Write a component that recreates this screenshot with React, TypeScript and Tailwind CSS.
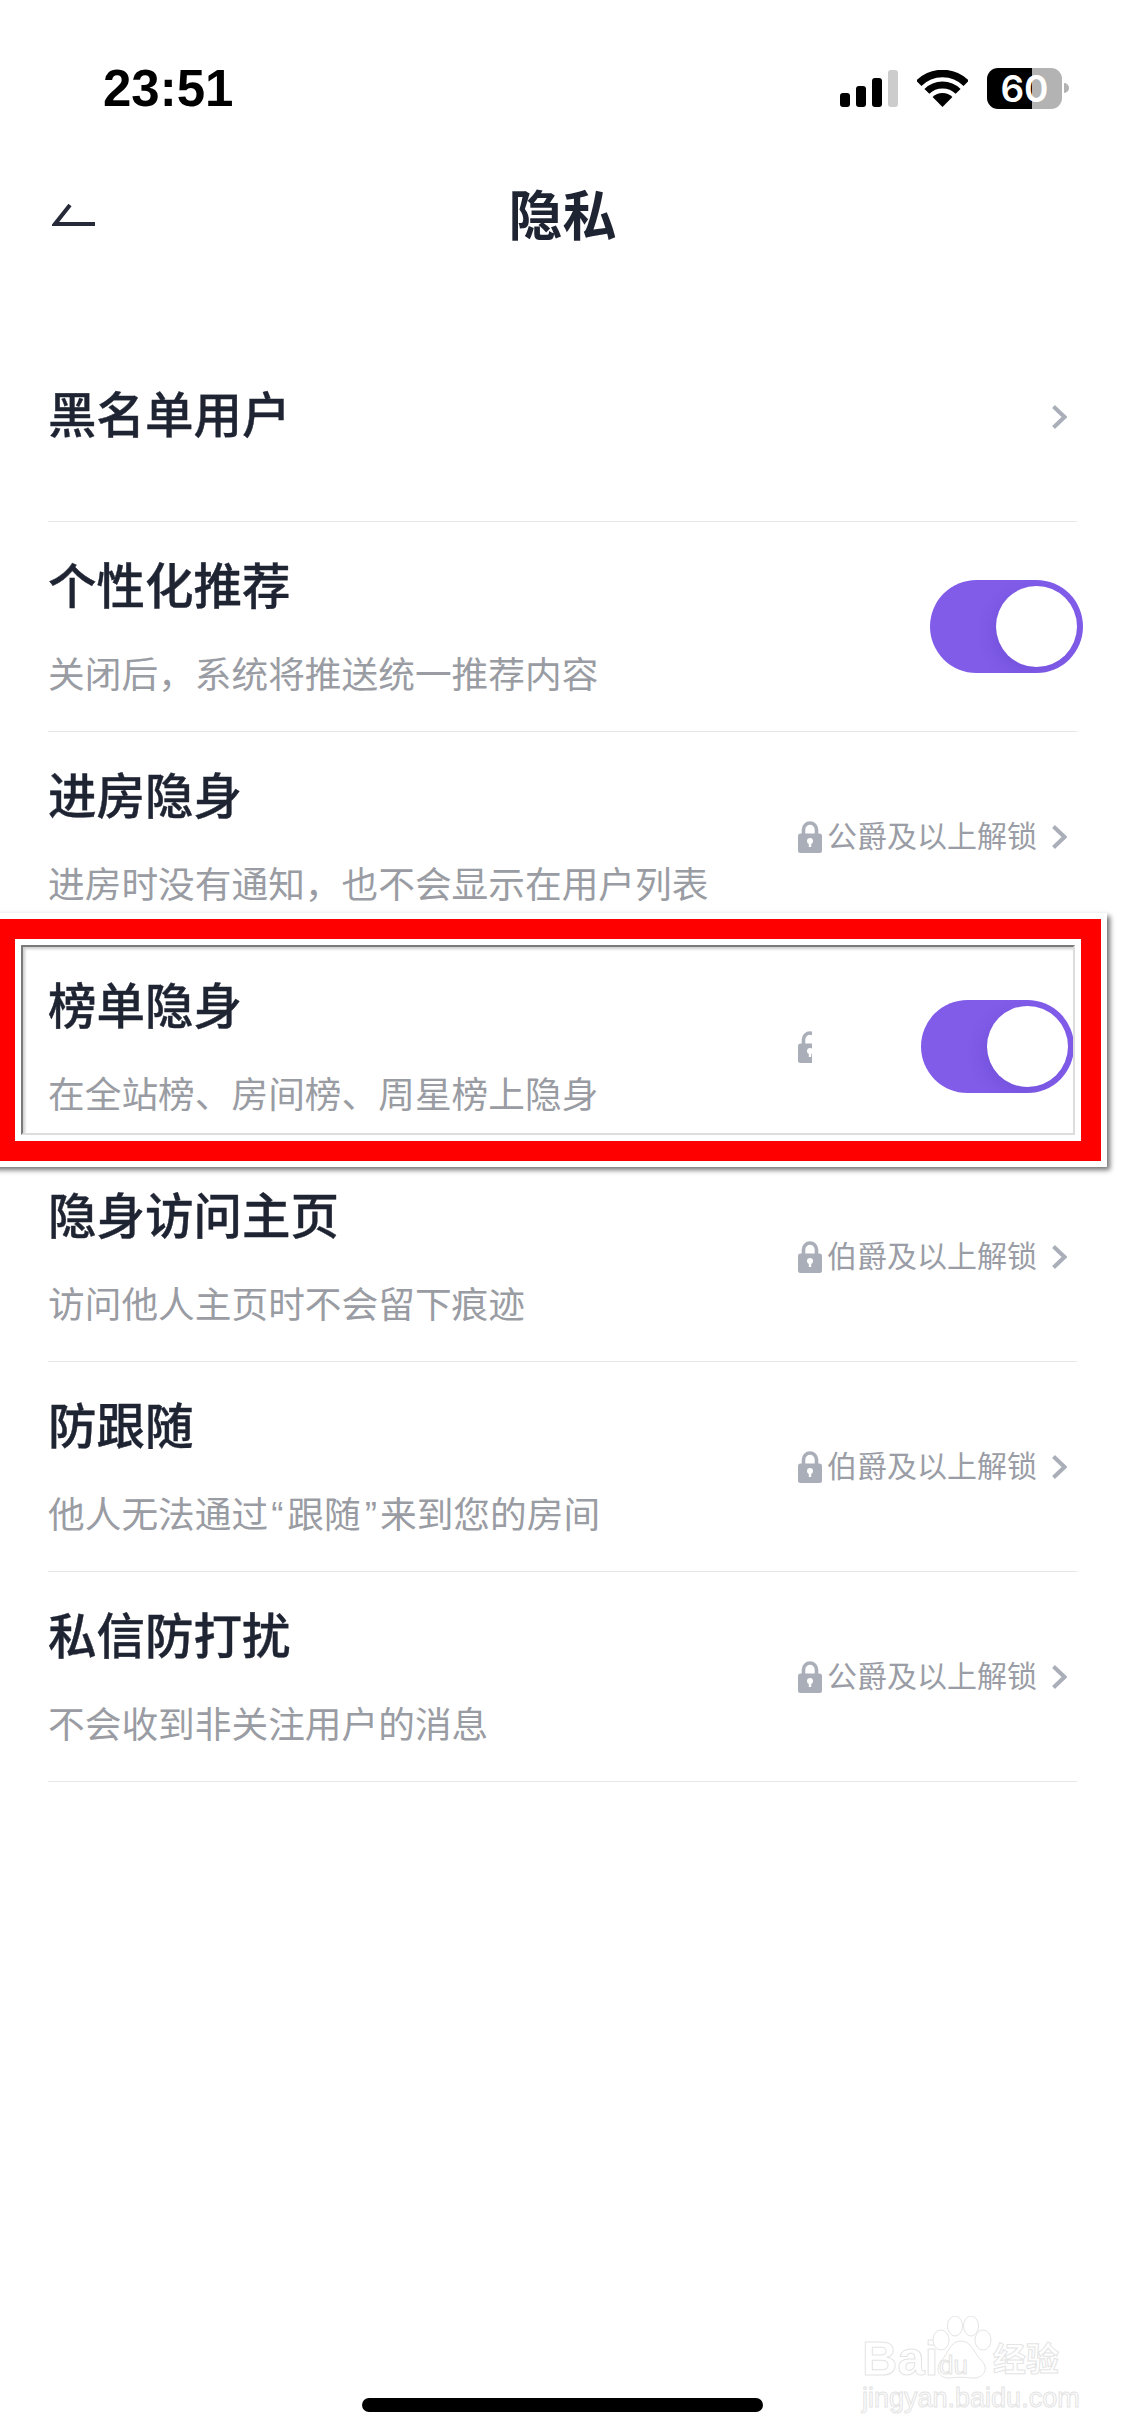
import type { ReactNode } from "react";

const CJK = "font-['Liberation_Sans','Noto_Sans_CJK_SC',sans-serif]";

type Row = {
  title: string;
  sub?: ReactNode;
  unlock?: string;
  on?: boolean;
};

const ROWS: Row[] = [
  { title: "个性化推荐", sub: "关闭后，系统将推送统一推荐内容", on: true },
  { title: "进房隐身", sub: "进房时没有通知，也不会显示在用户列表", unlock: "公爵及以上解锁" },
  { title: "榜单隐身", sub: "在全站榜、房间榜、周星榜上隐身", on: true },
  { title: "隐身访问主页", sub: "访问他人主页时不会留下痕迹", unlock: "伯爵及以上解锁" },
  {
    title: "防跟随",
    sub: (
      <>
        他人无法通过<span className="ml-[3px] mr-[4px]">“</span>跟随<span className="ml-[4px] mr-[3px]">”</span>来到您的房间
      </>
    ),
    unlock: "伯爵及以上解锁",
  },
  { title: "私信防打扰", sub: "不会收到非关注用户的消息", unlock: "公爵及以上解锁" },
];

function Chevron() {
  return (
    <svg width="15" height="24" viewBox="0 0 15 24" fill="none" className="shrink-0">
      <path d="M1.5 1.5 L12.5 12 L1.5 22.5" stroke="#a9aeb8" strokeWidth="4" />
    </svg>
  );
}

function Lock() {
  return (
    <svg width="24" height="32" viewBox="0 0 24 32" className="shrink-0">
      <path d="M5.5 15 V8.5 a6.5 6.5 0 0 1 13 0 V15" fill="none" stroke="#a9aeb8" strokeWidth="3.6" />
      <rect x="0" y="12.5" width="24" height="19.5" rx="2.5" fill="#a9aeb8" />
      <circle cx="12" cy="20" r="3" fill="#fff" />
      <rect x="10.8" y="20" width="2.4" height="6" fill="#fff" />
    </svg>
  );
}

function Toggle({ className }: { className: string }) {
  return (
    <div className={`flex h-[93px] w-[153px] shrink-0 items-center justify-end overflow-hidden rounded-full bg-[#805ce9] pr-[6px] ${className}`}>
      <div className="h-[81px] w-[81px] rounded-full bg-white shadow-[-6px_6px_14px_rgba(80,50,170,0.18)]" />
    </div>
  );
}

function Wifi() {
  return (
    <svg width="51" height="37" viewBox="0 0 51 37" fill="none">
      <path d="M25.5 37 L15.6 27.1 A14 14 0 0 1 35.4 27.1 Z" fill="#000" />
      <path d="M9.9 21.4 A22 22 0 0 1 41.1 21.4" stroke="#000" strokeWidth="7" />
      <path d="M1.8 13.3 A33.5 33.5 0 0 1 49.2 13.3" stroke="#000" strokeWidth="7.5" />
    </svg>
  );
}

function StatusBar() {
  return (
    <div className="flex h-[176px] items-center justify-between pl-[103px] pr-[56px]">
      <span className="font-['Liberation_Sans',sans-serif] text-[51px] font-bold leading-none text-black">23:51</span>
      <div className="flex items-center">
        <div className="flex items-end gap-[6px]">
          <div className="h-[14px] w-[10px] rounded-[3px] bg-black" />
          <div className="h-[21px] w-[10px] rounded-[3px] bg-black" />
          <div className="h-[29px] w-[10px] rounded-[3px] bg-black" />
          <div className="h-[37px] w-[10px] rounded-[3px] bg-[#cccccc]" />
        </div>
        <div className="ml-[19px]">
          <Wifi />
        </div>
        <div className="relative ml-[19px] flex h-[41px] w-[75px]">
          <div className="h-full w-[45px] rounded-l-[11px] bg-black" />
          <div className="h-full w-[30px] rounded-r-[11px] bg-[#b3b3b3]" />
          <span className="absolute inset-0 flex items-center justify-center font-['Inter',sans-serif] text-[37px] font-semibold leading-none text-white">60</span>
        </div>
        <div className="ml-[2px] h-[10px] w-[5px] rounded-r-full bg-[#b3b3b3]" />
      </div>
    </div>
  );
}

function Header() {
  return (
    <div className="relative flex h-[78px] items-center justify-center">
      <svg width="44" height="23" viewBox="0 0 44 23" fill="none" className="absolute left-[52px] top-[28px]">
        <path d="M18 1 L3 20 H43" stroke="#262a38" strokeWidth="4" />
      </svg>
      <span className="pt-[4px] text-[54px] font-bold leading-none text-[#1f2433]">隐私</span>
    </div>
  );
}

const TITLE = "text-[48.5px] font-medium leading-[60px] text-[#1f2433] [-webkit-text-stroke:0.4px_#1f2433]";

function SettingRow({ row, shifted }: { row: Row; shifted: boolean }) {
  return (
    <div className="flex h-[210px] items-center justify-between border-b border-[#e6e7e9]">
      <div className="pt-[5px]">
        <div className={TITLE}>{row.title}</div>
        <div className="mt-[34px] text-[36.7px] leading-[50px] text-[#9a9ca3]">{row.sub}</div>
      </div>
      {row.unlock && (
        <div className="mr-[10px] flex items-center">
          <Lock />
          <span className="ml-[5px] mr-[15px] text-[30px] leading-none text-[#9a9da5]">{row.unlock}</span>
          <Chevron />
        </div>
      )}
      {row.on && !shifted && <Toggle className="mr-[-6px]" />}
      {row.on && shifted && (
        <div className="mr-[3px] flex items-center">
          <div className="mr-[109px] w-[14px] overflow-hidden">
            <Lock />
          </div>
          <Toggle className="" />
        </div>
      )}
    </div>
  );
}

// red annotation drawn on top of the screenshot
function RedFrame() {
  return (
    <div className="pointer-events-none absolute left-[-11px] top-[913px] h-[254px] w-[1118px] border-[6px] border-white shadow-[3px_3px_5px_rgba(0,0,0,0.55)]">
      <div className="h-full w-full border-[20px] border-[#ff0000]">
        <div className="h-full w-full border-[6px] border-white">
          <div className="h-full w-full border-2 border-t-[#7a7a7a] border-l-[#7a7a7a] border-r-[#dddddd] border-b-[#dddddd] shadow-[inset_2px_2px_3px_rgba(0,0,0,0.2)]" />
        </div>
      </div>
    </div>
  );
}

function Watermark() {
  const stroke = "text-white [-webkit-text-stroke:1px_#e4e4e4]";
  return (
    <div className="pointer-events-none absolute left-[860px] top-[2314px] h-[100px] w-[210px]">
      <span className={`absolute left-[2px] top-[20px] font-['Liberation_Sans',sans-serif] text-[49px] font-bold leading-none ${stroke}`}>Bai</span>
      <svg width="62" height="64" viewBox="0 0 62 64" className="absolute left-[70px] top-[2px]" fill="#fff" stroke="#e4e4e4" strokeWidth="1">
        <ellipse cx="11" cy="24" rx="8" ry="10" />
        <ellipse cx="25" cy="10" rx="7.5" ry="10" />
        <ellipse cx="41" cy="10" rx="7.5" ry="10" />
        <ellipse cx="53" cy="24" rx="8" ry="10" />
        <path d="M31 25 C42 25 44 38 52 45 C60 54 52 63 42 62 C34 61 28 61 20 62 C10 63 4 54 11 45 C18 38 20 25 31 25 Z" />
      </svg>
      <span className={`absolute left-[79px] top-[38px] font-['Liberation_Sans',sans-serif] text-[26px] leading-none ${stroke}`}>du</span>
      <span className={`absolute left-[133px] top-[29px] text-[33px] font-bold leading-none ${stroke}`}>经验</span>
      <span className={`absolute left-[2px] top-[71px] font-['Liberation_Sans',sans-serif] text-[27px] leading-none ${stroke}`}>jingyan.baidu.com</span>
    </div>
  );
}

export default function App() {
  return (
    <div className={`relative flex h-[2436px] w-[1125px] flex-col overflow-hidden bg-white ${CJK}`}>
      <StatusBar />
      <Header />

      <div className="px-[48px] pt-[58px]">
        {/* blacklist row has no subtitle */}
        <div className="flex h-[210px] items-center justify-between border-b border-[#e6e7e9]">
          <span className={`pb-[2px] ${TITLE}`}>黑名单用户</span>
          <div className="mr-[10px]">
            <Chevron />
          </div>
        </div>
        {ROWS.map((r, i) => (
          <SettingRow key={r.title} row={r} shifted={i === 2} />
        ))}
      </div>

      <div className="mt-auto flex justify-center pb-[24px]">
        <div className="h-[14px] w-[401px] rounded-full bg-black" />
      </div>

      <RedFrame />
      <Watermark />
    </div>
  );
}
